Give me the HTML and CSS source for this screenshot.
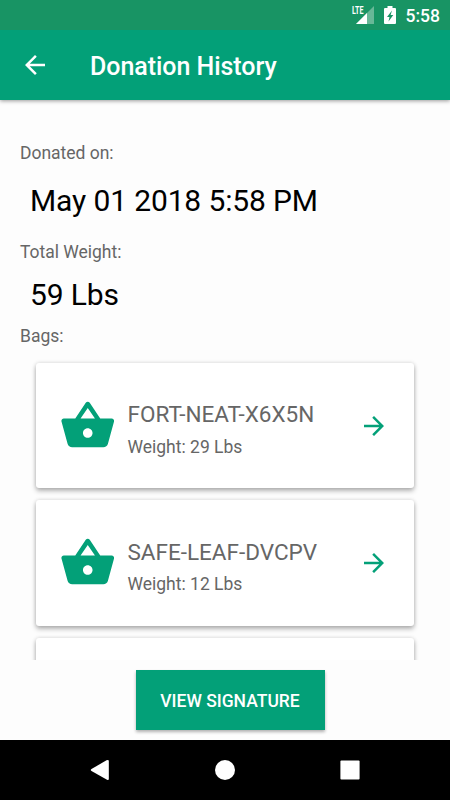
FILE: index.html
```html
<!DOCTYPE html>
<html lang="en">
<head>
<meta charset="utf-8">
<title>Donation History</title>
<link rel="stylesheet" href="styles.css">
</head>
<body>
<svg class="defs" aria-hidden="true">
  <symbol id="basket" viewBox="0 0 24 24"><path d="M17.21 9l-4.38-6.56c-.19-.28-.51-.42-.83-.42-.32 0-.64.14-.83.43L6.79 9H2c-.55 0-1 .45-1 1 0 .09.01.18.04.27l2.54 9.27c.23.84 1 1.46 1.92 1.46h13c.92 0 1.69-.62 1.93-1.46l2.54-9.27L23 10c0-.55-.45-1-1-1h-4.79zM9 9l3-4.4L15 9H9zm3 8c-1.1 0-2-.9-2-2s.9-2 2-2 2 .9 2 2-.9 2-2 2z"/></symbol>
  <symbol id="forward" viewBox="0 0 24 24"><path d="M12 4l-1.41 1.41L16.17 11H4v2h12.17l-5.58 5.59L12 20l8-8z"/></symbol>
</svg>
<div class="screen">
  <div class="status-bar">
    <svg class="signal" viewBox="0 0 24 20">
      <path class="signal-dim" d="M22 0v18H4z"/>
      <path class="signal-mask" d="M0 0h13v9H0z"/>
      <path d="M15 7v11H4z"/>
      <text class="lte" x="0" y="8" textLength="11.500" lengthAdjust="spacingAndGlyphs">LTE</text>
    </svg>
    <svg class="battery" viewBox="0 0 12 18"><path fill-rule="evenodd" d="M3.500 0h5v2H11q1 0 1 1v14q0 1-1 1H1q-1 0-1-1V3q0-1 1-1h2.500zM8 4.500L3 11h2.500L4.500 15.500 9.300 9H6.600z"/></svg>
    <span class="clock">5:58</span>
  </div>
  <header class="app-bar">
    <svg class="back" viewBox="0 0 24 24"><path d="M20 11H7.830l5.590-5.590L12 4l-8 8 8 8 1.410-1.410L7.830 13H20z"/></svg>
    <h1 class="title">Donation History</h1>
  </header>
  <main class="content">
    <div class="label">Donated on:</div>
    <div class="value value-date">May 01 2018 5:58 PM</div>
    <div class="label">Total Weight:</div>
    <div class="value value-weight">59 Lbs</div>
    <div class="label">Bags:</div>
    <div class="list">
      <div class="card">
        <svg class="basket"><use href="#basket"/></svg>
        <div class="info"><div class="code">FORT-NEAT-X6X5N</div><div class="weight">Weight: 29 Lbs</div></div>
        <svg class="forward"><use href="#forward"/></svg>
      </div>
      <div class="card">
        <svg class="basket"><use href="#basket"/></svg>
        <div class="info"><div class="code">SAFE-LEAF-DVCPV</div><div class="weight">Weight: 12 Lbs</div></div>
        <svg class="forward"><use href="#forward"/></svg>
      </div>
      <div class="card"></div>
    </div>
  </main>
  <footer class="actions"><button class="button">VIEW SIGNATURE</button></footer>
  <nav class="nav-bar">
    <div class="nav-item"><svg class="nav-icon" viewBox="0 0 20 20"><path d="M16.500 0.300Q18.800-.5 18.800 1V19Q18.800 20.500 17 19.700L1.500 11Q0 10 1.500 9z"/></svg></div>
    <div class="nav-item"><svg class="nav-icon" viewBox="0 0 20 20"><circle cx="10" cy="10" r="10"/></svg></div>
    <div class="nav-item"><svg class="nav-icon" viewBox="0 0 20 20"><rect x=".4" y=".4" width="19.200" height="19.200" rx="1"/></svg></div>
  </nav>
</div>
</body>
</html>
```

FILE: styles.css
```css
* { box-sizing: border-box; }
body { margin: 0; font-family: Roboto, sans-serif; background: #fdfdfd; }
svg { display: block; flex: none; fill: currentColor; }
.defs { display: none; }
.screen { width: 450px; height: 800px; display: flex; flex-direction: column; overflow: hidden; background: #fdfdfd; }

.status-bar { position: relative; z-index: 1; height: 30px; flex: none; display: flex; align-items: flex-start; padding: 6px 10px 0 0; justify-content: flex-end; background: #189464; color: #fff; }
.signal { width: 24px; height: 20px; margin-right: 8px; overflow: visible; }
.signal-dim { fill: #68b897; }
.signal-mask { fill: #189464; }
.lte { font-size: 11px; font-weight: 700; }
.battery { width: 12px; height: 18px; margin-right: 10px; }
.clock { font-size: 17.5px; line-height: 20px; font-weight: 500; }

.app-bar { height: 70px; flex: none; display: flex; align-items: center; padding: 0 20px; background: #03a078; color: #fff; box-shadow: 0 1px 4px rgba(0, 0, 0, .4); }
.back { width: 30px; height: 30px; }
.title { margin: 4px 0 0 40px; font-size: 25px; line-height: 30px; font-weight: 500; letter-spacing: -0.05px; }

.content { flex: 1; min-height: 0; padding: 43px 20px 0; display: flex; flex-direction: column; }
.label { flex: none; font-size: 17.5px; line-height: 20px; letter-spacing: -0.02px; color: #666; }
.value { flex: none; padding-left: 10px; font-size: 30px; line-height: 36px; letter-spacing: -0.13px; color: #000; }
.value-date { margin: 20px 0 23px; }
.value-weight { margin: 15px 0 13px; }
.list { flex: 1; min-height: 0; overflow: hidden; margin: 7px 10px 0; padding: 10px 6px 0; }
.card { display: flex; align-items: center; height: 125.4px; margin-bottom: 12.1px; padding: 0 25px 0 23.2px; border-radius: 3px; background: #fff; box-shadow: 0 3px 5px rgba(0, 0, 0, .28), 0 0 4px rgba(0, 0, 0, .14); }
.basket { width: 57.5px; height: 57.5px; color: #03a078; }
.info { flex: 1; margin: 7px 0 0 10.8px; color: #666; }
.code { font-size: 22.5px; line-height: 26px; }
.weight { margin-top: 9.5px; font-size: 17.5px; line-height: 20px; }
.forward { width: 30px; height: 30px; color: #03a078; }

.actions { height: 80px; flex: none; display: flex; justify-content: center; align-items: flex-start; padding: 10px 0 0 10px; }
.button { width: 189px; height: 60px; padding: 2px 0 0; border: 0; background: #03a078; color: #fff; font: 500 17.5px Roboto, sans-serif; box-shadow: 0 2px 3px rgba(0, 0, 0, .3); }
.nav-bar { height: 60px; flex: none; display: flex; justify-content: center; background: #000; color: #fff; }
.nav-item { width: 125px; display: flex; align-items: center; justify-content: center; }
.nav-icon { width: 20px; height: 20px; }
```
